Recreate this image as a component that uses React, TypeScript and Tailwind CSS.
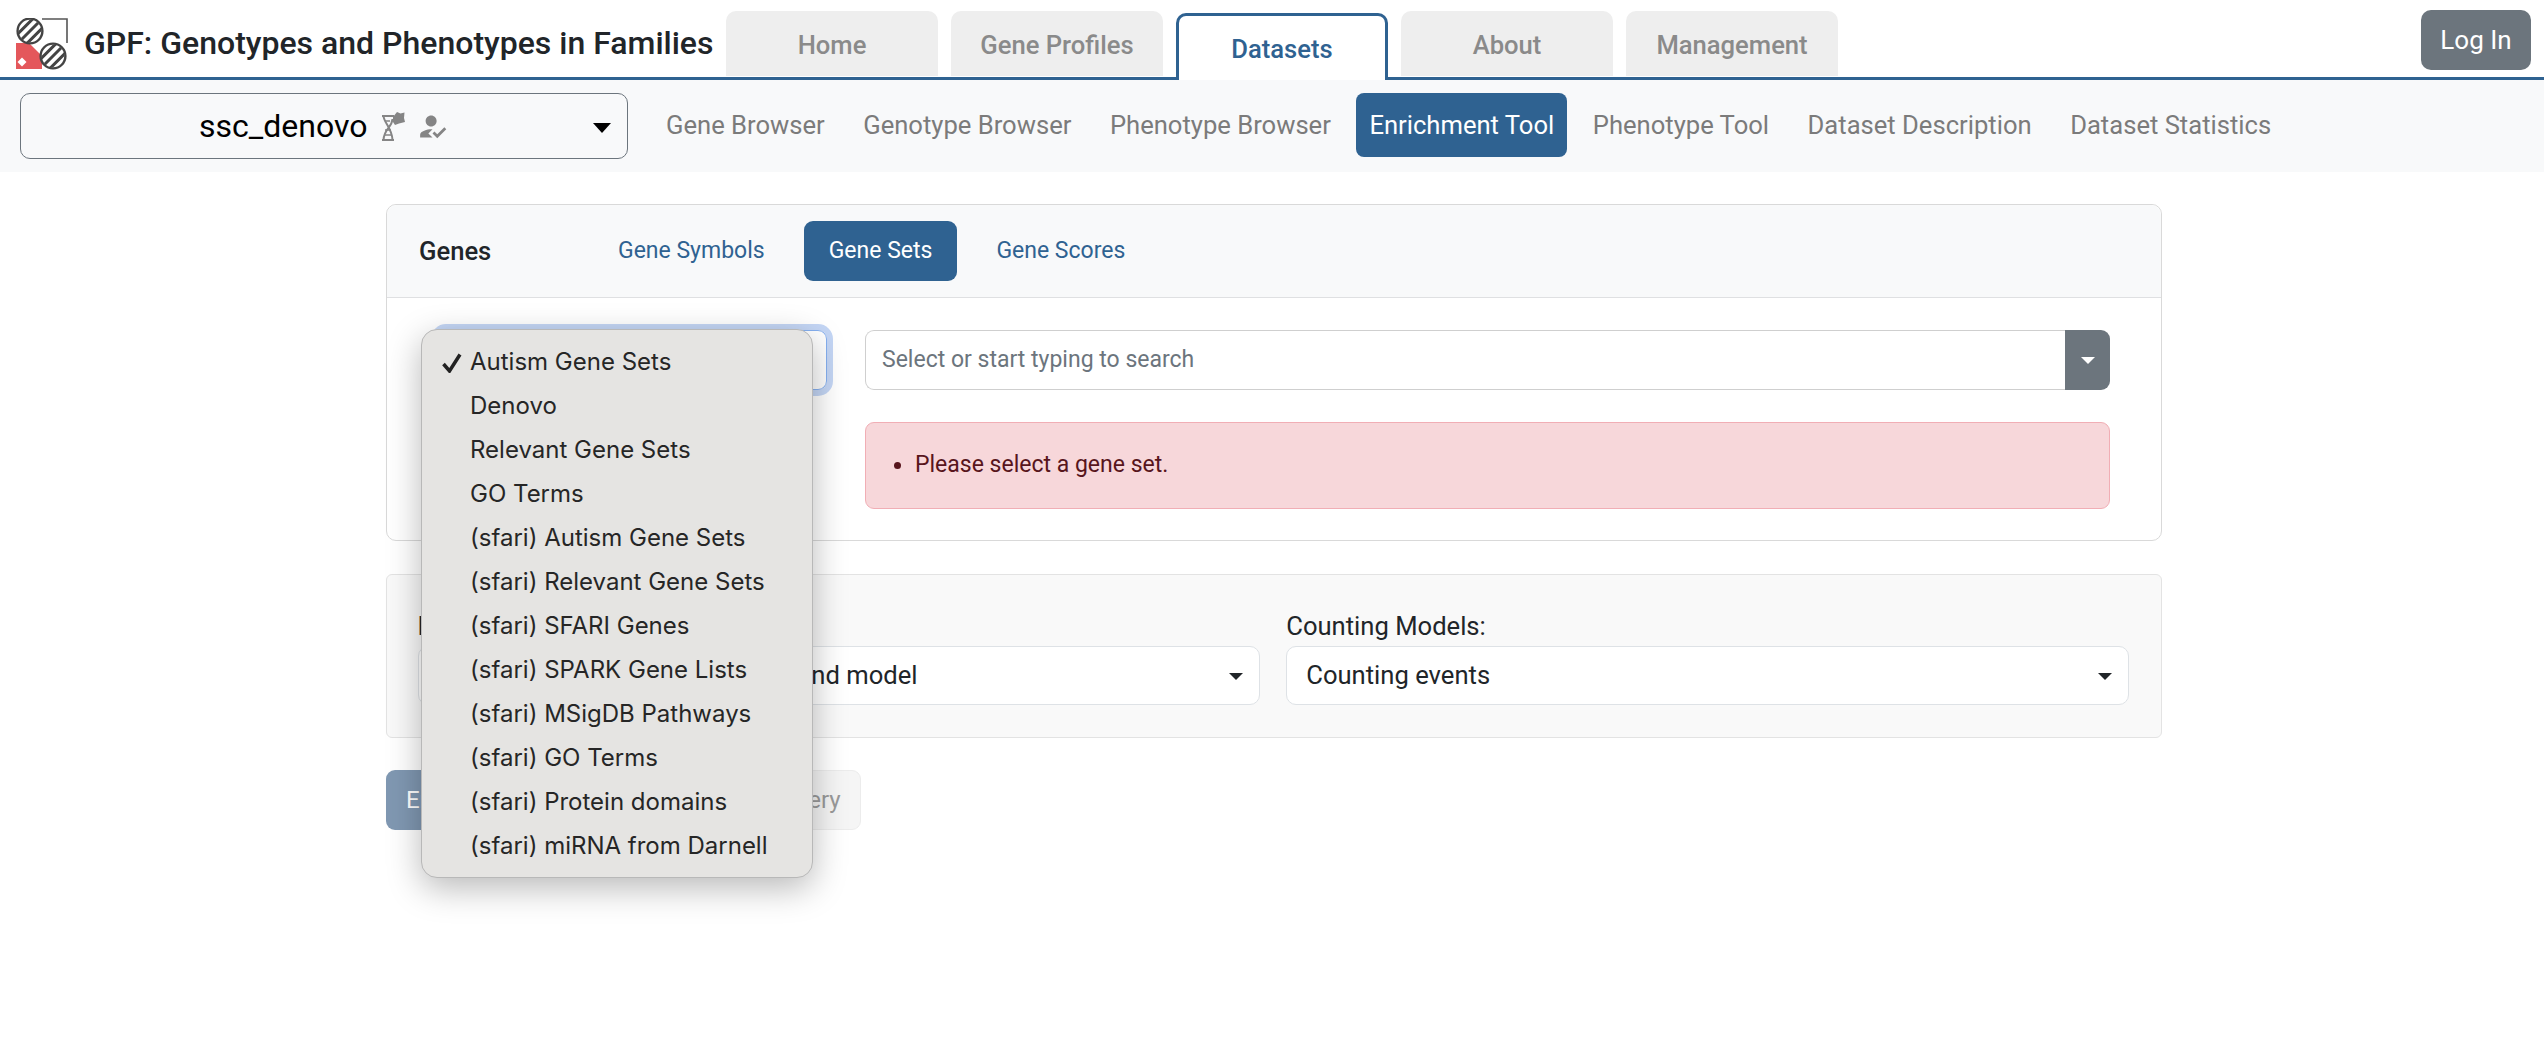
import React from "react";
import { MdHowToReg } from "react-icons/md";

function Logo() {
  return (
    <svg width="52" height="52" viewBox="0 0 52 52" className="shrink-0">
      <defs>
        <clipPath id="c1"><circle cx="14" cy="13" r="11.5" /></clipPath>
        <clipPath id="c2"><circle cx="37" cy="38" r="11.5" /></clipPath>
      </defs>
      <path d="M26 1H51V25" fill="none" stroke="#555" strokeWidth="1.6" />
      <path d="M0 25H13L26 38V51H0Z" fill="#e4575b" />
      <path d="M6 39.5L10.5 44L6 48.5L1.5 44Z" fill="#fff" />
      <circle cx="14" cy="13" r="12.4" fill="#fff" stroke="#444" strokeWidth="2.4" />
      <circle cx="37" cy="38" r="12.4" fill="#fff" stroke="#444" strokeWidth="2.4" />
      <g clipPath="url(#c1)" stroke="#444" strokeWidth="3">
        <path d="M-2 19.6L19.6 -2M3 24L27 0M7.4 29L31 5.4" />
      </g>
      <g clipPath="url(#c2)" stroke="#444" strokeWidth="3">
        <path d="M21 44.6L42.6 23M26 49L50 25M30.4 54L54 30.4" />
      </g>
    </svg>
  );
}

function DnaStar() {
  return (
    <svg width="24" height="31" viewBox="0 0 24 31" className="shrink-0">
      <g fill="none" stroke="#858585" strokeWidth="2">
        <path d="M1 5H13M1 29H13" strokeWidth="2.2" />
        <path d="M2.5 5C3 12 11 17 11.5 29M11.5 8C11 17 3 17 2.5 29" />
        <path d="M4 19H10M3 24H11M4 10H9" strokeWidth="1.6" />
      </g>
      <path d="M12 6L16 1L19.5 2.5L23.5 1.5L23 7L24 11L18 12.5L14 14L12 11Z" fill="#858585" />
    </svg>
  );
}

function Caret({ className }: { className: string }) {
  return <span className={"inline-block h-0 w-0 border-x-solid border-x-transparent border-t-solid " + className} />;
}

const topTabs = ["Home", "Gene Profiles", "Datasets", "About", "Management"];
const subLinks = ["Gene Browser", "Genotype Browser", "Phenotype Browser", "Enrichment Tool", "Phenotype Tool", "Dataset Description", "Dataset Statistics"];
const menuItems = [
  "Autism Gene Sets",
  "Denovo",
  "Relevant Gene Sets",
  "GO Terms",
  "(sfari) Autism Gene Sets",
  "(sfari) Relevant Gene Sets",
  "(sfari) SFARI Genes",
  "(sfari) SPARK Gene Lists",
  "(sfari) MSigDB Pathways",
  "(sfari) GO Terms",
  "(sfari) Protein domains",
  "(sfari) miRNA from Darnell",
];

export default function App() {
  return (
    <div className="min-h-[1040px] bg-white text-[#212529] [font-family:Roboto,sans-serif]">
      <header className="relative flex h-[80px] border-b-[3px] border-[#2f6291] pl-[16px]">
        <div className="mt-[18px]"><Logo /></div>
        <div className="ml-[16px] mt-[24px] w-[642px] whitespace-nowrap text-[32px] leading-[38px] font-medium">GPF: Genotypes and Phenotypes in Families</div>
        <nav className="flex gap-[13px] pt-[11px]">
          {topTabs.map((t) =>
            t === "Datasets" ? (
              <div key={t} className="z-10 mb-[-3px] mt-[2px] flex h-[67px] w-[212px] items-center justify-center rounded-t-[10px] border-[3px] border-b-0 border-[#2f6291] bg-white pt-[3px] text-[25.6px] font-medium text-[#2f6291]">{t}</div>
            ) : (
              <div key={t} className="flex h-[65px] w-[212px] items-center justify-center rounded-t-[10px] bg-[#eeeeee] pt-[4px] text-[25.6px] font-medium text-[#8a8a8a]">{t}</div>
            )
          )}
        </nav>
        <div className="ml-auto mr-[13px] mt-[10px] flex h-[60px] w-[110px] items-center justify-center rounded-[10px] bg-[#6c757d] text-[26px] text-white">Log In</div>
      </header>

      <div className="flex h-[92px] items-start bg-[#f8f9fa] pl-[20px] pt-[13px]">
        <div className="relative flex h-[66px] w-[608px] items-center rounded-[10px] border-[1.5px] border-[#6c757d] pl-[178px]">
          <span className="text-[32px] leading-none text-black">ssc_denovo</span>
          <span className="ml-[14px]"><DnaStar /></span>
          <MdHowToReg className="ml-[11px] text-[33px] text-[#858585]" />
          <Caret className="absolute right-[16px] top-[29px] border-x-[9px] border-t-[10px] border-t-black" />
        </div>
        <nav className="ml-[25px] flex gap-[12.5px]">
          {subLinks.map((l) => (
            <div key={l} className={"flex h-[64px] items-center rounded-[8px] px-[13px] pt-[1px] text-[25.6px] whitespace-nowrap " + (l === "Enrichment Tool" ? "bg-[#2f6291] text-white" : "text-[#7b7b7b]")}>{l}</div>
          ))}
        </nav>
      </div>

      <main className="ml-[386px] w-[1776px] pt-[32px]">
        <section className="h-[337px] rounded-[10px] border-[1.5px] border-[#d9d9d9]">
          <div className="flex h-[93px] items-center rounded-t-[10px] border-b border-[#dfe0e2] bg-[#f8f9fa] pl-[32px]">
            <span className="w-[173px] text-[25.6px] font-medium text-[#212529]">Genes</span>
            <div className="flex h-[60px] gap-[13px] text-[23px]">
              <div className="flex items-center px-[26px] text-[#2f6291]">Gene Symbols</div>
              <div className="flex items-center rounded-[9px] bg-[#2f6291] px-[25px] text-white">Gene Sets</div>
              <div className="flex items-center px-[26px] text-[#2f6291]">Gene Scores</div>
            </div>
          </div>
          <div className="flex pl-[50px] pt-[32px]">
            <div className="relative h-[60px] w-[390px] rounded-[9px] border-[1.5px] border-[#86b0f0] shadow-[0_0_0_6px_#c4d6f5]">
              <div className="absolute left-[-17px] top-[-2px] z-20 h-[549px] w-[392px] rounded-[16px] border border-[#b8b8b8] bg-[#e5e4e2] pb-[9px] pt-[10px] text-[24px] text-[#262626] shadow-[0_10px_34px_rgba(0,0,0,0.28)] [font-family:Inter,sans-serif]">
                {menuItems.map((m, i) => (
                  <div key={m} className="relative flex h-[44px] items-center whitespace-nowrap pl-[48px]">
                    {i === 0 && (
                      <svg width="20" height="20" viewBox="0 0 20 20" className="absolute left-[20px] top-[13px]">
                        <path d="M1.5 11L7.5 18L18 1.5" fill="none" stroke="#222" strokeWidth="3.5" />
                      </svg>
                    )}
                    {m}
                  </div>
                ))}
              </div>
            </div>
            <div className="ml-[38px] w-[1245px]">
              <div className="flex h-[60px]">
                <div className="flex flex-1 items-center rounded-l-[9px] border-[1.5px] border-r-0 border-[#cfcfcf] pl-[16px] text-[23px] text-[#6c757d]">Select or start typing to search</div>
                <div className="flex w-[45px] items-center justify-center rounded-r-[9px] bg-[#6c757d]">
                  <Caret className="border-x-[7px] border-t-[7px] border-t-white" />
                </div>
              </div>
              <div className="mt-[32px] flex h-[87px] items-center rounded-[9px] border border-[#f1aeb5] bg-[#f7d7da] pl-[28px] text-[23px] text-[#58151c]">
                <span className="mr-[14px] h-[7px] w-[7px] rounded-full bg-[#58151c]" />
                Please select a gene set.
              </div>
            </div>
          </div>
        </section>

        <section className="mt-[33px] flex h-[164px] gap-[26px] rounded-[6px] border-[1.5px] border-[#e3e3e3] bg-[#f9f9f9] pl-[30.5px] pr-[32px] pt-[33px]">
          <div className="flex-1">
            <div className="text-[25.6px] leading-[37px]">Background Models:</div>
            <div className="relative mt-[1px] flex h-[59px] items-center rounded-[10px] border-[1.5px] border-[#dee2e6] bg-white pl-[26px] text-[25.6px] whitespace-nowrap">
              Coding length variants background model
              <Caret className="absolute right-[16px] top-[26px] border-x-[7px] border-t-[7px] border-t-[#212529]" />
            </div>
          </div>
          <div className="flex-1">
            <div className="text-[25.6px] leading-[37px]">Counting Models:</div>
            <div className="relative mt-[1px] flex h-[59px] items-center rounded-[10px] border-[1.5px] border-[#dee2e6] bg-white pl-[19px] text-[25.6px]">
              Counting events
              <Caret className="absolute right-[16px] top-[26px] border-x-[7px] border-t-[7px] border-t-[#212529]" />
            </div>
          </div>
        </section>

        <div className="mt-[32px] flex h-[60px] gap-[13px] text-[24px]">
          <div className="flex w-[292px] items-center rounded-[9px] bg-[#8098b2] pl-[20px] text-white">Enrich</div>
          <div className="flex w-[170px] items-center justify-center rounded-[9px] border border-[#ececec] bg-[#f5f5f5] text-[#9a9a9a]">Share Query</div>
        </div>
      </main>
    </div>
  );
}
